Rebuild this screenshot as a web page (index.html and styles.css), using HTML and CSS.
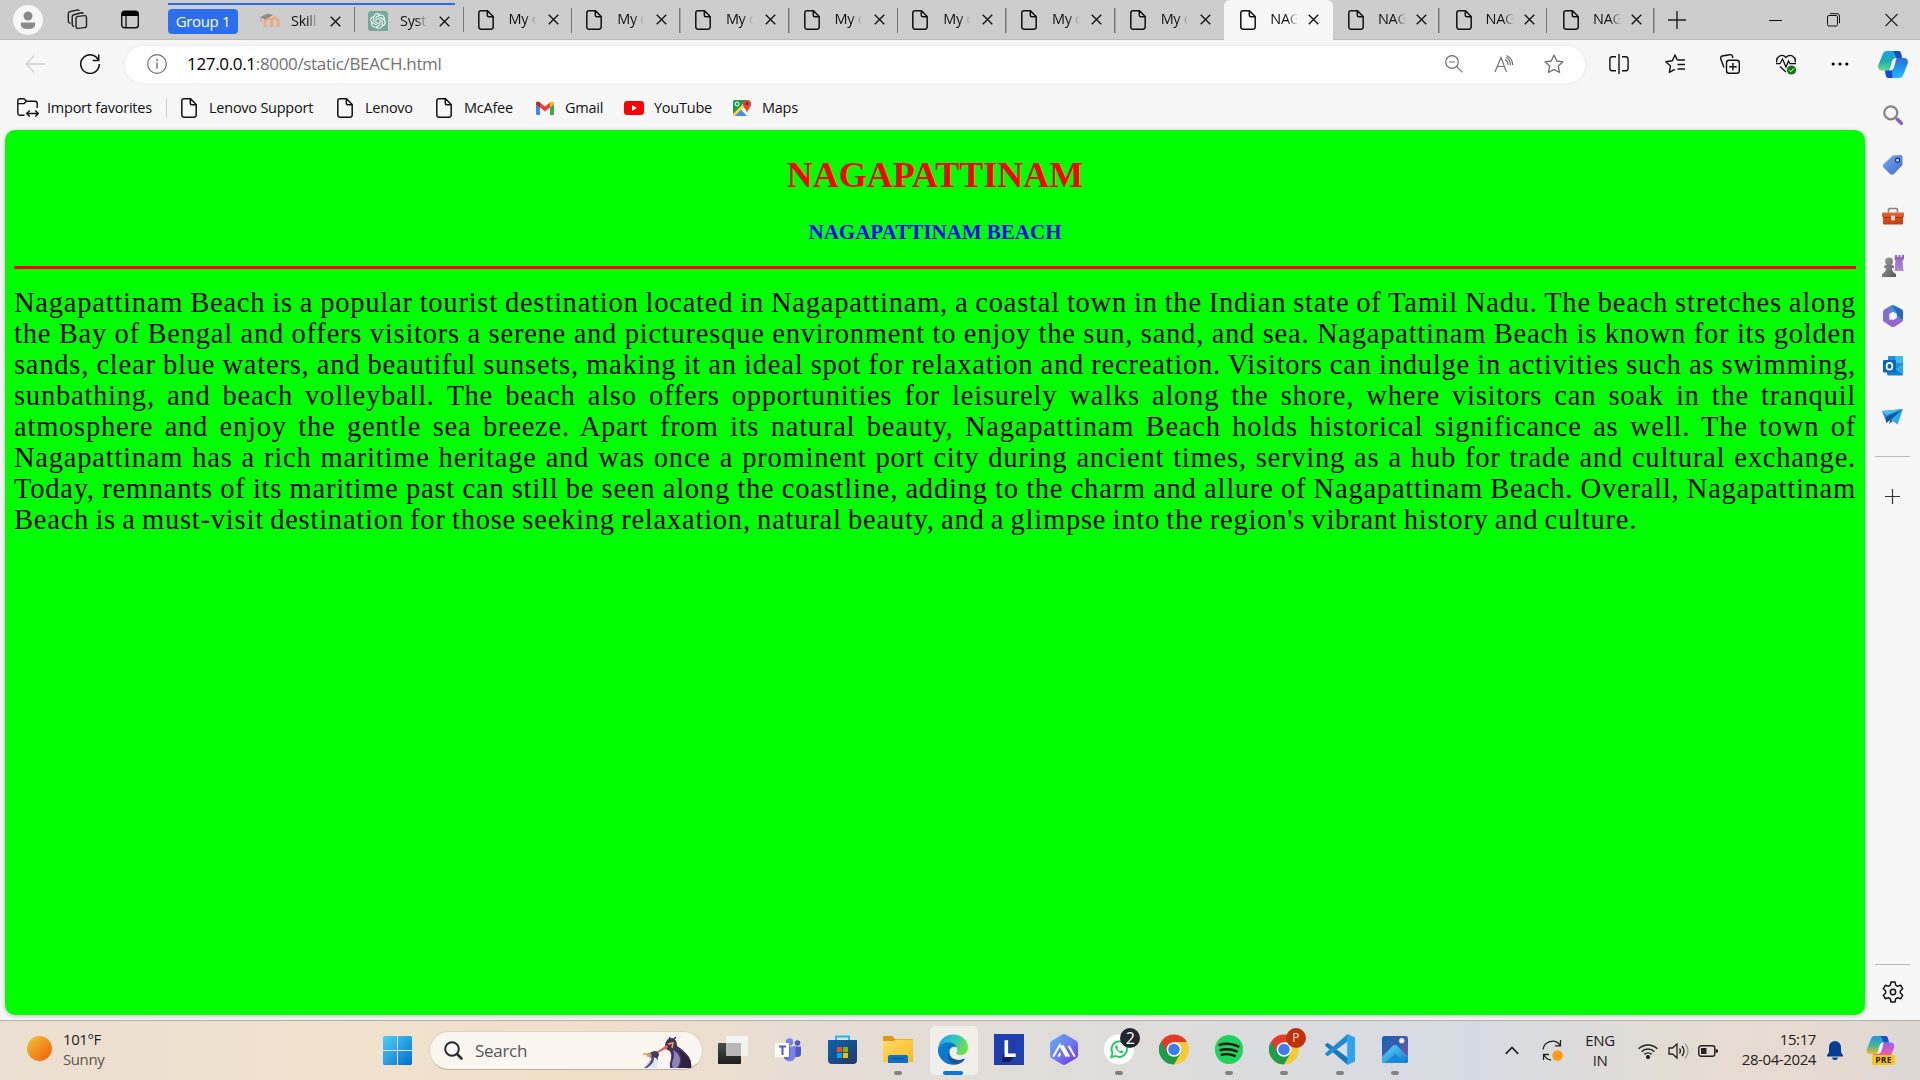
FILE: index.html
```html
<!DOCTYPE html>
<html lang="en">
<head>
<meta charset="utf-8">
<title>NAGAPATTINAM</title>
<link rel="stylesheet" href="styles.css">
</head>
<body>
<svg class="defs" width="0" height="0">
  <defs>
    <symbol id="page" viewBox="0 0 16 20"><path d="M3 .8h6.500L15.200 6.500V17a2.200 2.200 0 0 1-2.200 2.200H3A2.200 2.200 0 0 1 .8 17V3A2.200 2.200 0 0 1 3 .8zM9.300 1v4.200a1.500 1.500 0 0 0 1.500 1.500H15" fill="none" stroke="#111" stroke-width="1.500"/></symbol>
    <symbol id="close" viewBox="0 0 12 12"><path d="M.8.8l10.400 10.400M11.200.8L.8 11.200" fill="none" stroke="#111" stroke-width="1.500"/></symbol>
    <symbol id="chrome" viewBox="0 0 30 30"><circle cx="15" cy="15" r="15" fill="#fcc934"/><path d="M2 7.500A15 15 0 0 0 15 30L21.500 18.700 15 15z" fill="#1e9e4a"/><path d="M28 7.500H15L8.500 18.700 2 7.500A15 15 0 0 1 28 7.500z" fill="#e33b2e"/><path d="M2 7.500L8.500 18.700 15 22 10 29A15 15 0 0 1 2 7.500z" fill="#1e9e4a"/><circle cx="15" cy="15" r="7.300" fill="#fff"/><circle cx="15" cy="15" r="5.800" fill="#3b7ded"/></symbol>
    <linearGradient id="gTag" x1="0" y1="0" x2="1" y2="1"><stop offset="0" stop-color="#7aa7f0"/><stop offset="1" stop-color="#3f6fd0"/></linearGradient>
    <linearGradient id="gCopA" x1="0" y1="0" x2="0" y2="1"><stop offset="0" stop-color="#1aa2ea"/><stop offset=".5" stop-color="#1faab0"/><stop offset="1" stop-color="#62dc8c"/></linearGradient>
    <linearGradient id="gCopB" x1="0" y1="0" x2="0" y2="1"><stop offset="0" stop-color="#2b6fd8"/><stop offset=".6" stop-color="#1d9bf5"/><stop offset="1" stop-color="#29b9ff"/></linearGradient>
    <linearGradient id="gPreA" x1="0" y1="0" x2="0" y2="1"><stop offset="0" stop-color="#2196f0"/><stop offset=".5" stop-color="#3fb59a"/><stop offset="1" stop-color="#f2b92c"/></linearGradient>
    <linearGradient id="gPreB" x1="0" y1="0" x2="0" y2="1"><stop offset="0" stop-color="#9a5cf0"/><stop offset=".6" stop-color="#ec5bb0"/><stop offset="1" stop-color="#f58a6b"/></linearGradient>
    <linearGradient id="gSun" x1="0" y1="0" x2="1" y2="1"><stop offset=".1" stop-color="#edbb34"/><stop offset=".8" stop-color="#f2700f"/></linearGradient>
    <linearGradient id="gWin" gradientUnits="userSpaceOnUse" x1="0" y1="0" x2="29" y2="29"><stop offset="0" stop-color="#4fd0fb"/><stop offset="1" stop-color="#006fd0"/></linearGradient>
    <linearGradient id="gFold" x1="0" y1="0" x2="1" y2="1"><stop offset="0" stop-color="#ffdc68"/><stop offset="1" stop-color="#fcb917"/></linearGradient>
    <linearGradient id="gStore" x1="0" y1="0" x2="1" y2="1"><stop offset="0" stop-color="#0b64b4"/><stop offset="1" stop-color="#243760"/></linearGradient>
    <linearGradient id="gEdgeT" x1="0" y1="0" x2="1" y2=".4"><stop offset="0" stop-color="#1d9ae0"/><stop offset=".5" stop-color="#2cc3d2"/><stop offset="1" stop-color="#6ce04c"/></linearGradient>
    <linearGradient id="gEdgeB" x1="0" y1="0" x2="1" y2="1"><stop offset="0" stop-color="#1385dc"/><stop offset="1" stop-color="#0f4f9e"/></linearGradient>
    <linearGradient id="gHex" x1="0" y1="0" x2="1" y2="1"><stop offset="0" stop-color="#5bb2f5"/><stop offset=".5" stop-color="#6d7cf0"/><stop offset="1" stop-color="#7428ee"/></linearGradient>
    <linearGradient id="gPhoto" x1="0" y1="0" x2="1" y2="1"><stop offset="0" stop-color="#1161b2"/><stop offset="1" stop-color="#7a55a8"/></linearGradient>
    <linearGradient id="gHill" x1="0" y1="0" x2="1" y2="1"><stop offset="0" stop-color="#5ed9fb"/><stop offset="1" stop-color="#0e78cf"/></linearGradient>
    <linearGradient id="gBox" x1="0" y1="0" x2="0" y2="1"><stop offset="0" stop-color="#e8662c"/><stop offset="1" stop-color="#c23c0c"/></linearGradient>
    <linearGradient id="gPawn" x1="0" y1="0" x2="1" y2="1"><stop offset="0" stop-color="#a5a5a5"/><stop offset="1" stop-color="#555"/></linearGradient>
    <linearGradient id="gRook" x1="0" y1="0" x2="0" y2="1"><stop offset="0" stop-color="#8d5fc0"/><stop offset="1" stop-color="#b48ae0"/></linearGradient>
    <linearGradient id="gDark" x1="0" y1="0" x2="0" y2="1"><stop offset="0" stop-color="#4c4c4a"/><stop offset="1" stop-color="#1c1c1a"/></linearGradient>
  </defs>
</svg>

<header class="titlebar">
  <div class="window-tools">
    <svg width="30" height="30" viewBox="0 0 30 30"><circle cx="15" cy="15" r="15" fill="#f7f7f7"/><circle cx="15" cy="11" r="4.500" fill="#8a8a8a"/><path d="M7.800 17.500h14.400v2c0 3-3.200 4.600-7.200 4.600s-7.200-1.600-7.200-4.600z" fill="#8a8a8a"/></svg>
    <svg width="21" height="21" viewBox="0 0 21 21" fill="none" stroke="#222" stroke-width="1.400"><rect x="9" y="7.500" width="10.500" height="12" rx="2" transform="skewY(-6) translate(0 1)"/><path d="M7.200 17.500l-1-.4a2 2 0 0 1-1-1.700V7.600a2 2 0 0 1 1.500-1.900l8-1.900a1.500 1.500 0 0 1 1.500 1M3.500 14.500l-1.200-.7a2 2 0 0 1-1-1.700V4.700a2 2 0 0 1 1.500-1.900L10.500.9a1.600 1.600 0 0 1 1.700 1"/></svg>
    <svg width="18" height="19" viewBox="0 0 18 19"><rect x=".7" y="1.200" width="16.600" height="16.600" rx="2.800" fill="none" stroke="#111" stroke-width="1.400"/><path d="M1 6V3.500A2.500 2.500 0 0 1 3.500 1h11A2.500 2.500 0 0 1 17 3.500V6z" fill="#000"/><path d="M5 6v12" stroke="#111" stroke-width="1.300"/></svg>
  </div>
  <div class="tab-group">
    <span class="group-chip">Group 1</span>
    <div class="tab tab-first">
      <svg class="fav" width="20" height="16" viewBox="0 0 20 16"><path d="M5 14V8.500a3 3 0 0 1 6.500 0V14M11.700 14V8.500a3 3 0 0 1 6.500 0V14" fill="none" stroke="#e9ad80" stroke-width="3"/><path d="M0 4l8-3.500L13 2 5 6.500z" fill="#8a8a86"/><path d="M1 4v5" stroke="#aaa"/></svg>
      <span class="label">Skillrack</span><svg class="x"><use href="#close"/></svg>
    </div>
    <div class="tab">
      <svg class="fav" width="20" height="20" viewBox="0 0 20 20"><path d="M3 0h14a3 3 0 0 1 3 3v17H3a3 3 0 0 1-3-3V3a3 3 0 0 1 3-3z" fill="#75a99c"/><path transform="translate(2.200 2.200) scale(.65)" fill="#fff" d="M22.2819 9.8211a5.9847 5.9847 0 0 0-.5157-4.9108 6.0462 6.0462 0 0 0-6.5098-2.9A6.0651 6.0651 0 0 0 4.9807 4.1818a5.9847 5.9847 0 0 0-3.9977 2.9 6.0462 6.0462 0 0 0 .7427 7.0966 5.98 5.98 0 0 0 .511 4.9107 6.051 6.051 0 0 0 6.5146 2.9001A5.9847 5.9847 0 0 0 13.2599 24a6.0557 6.0557 0 0 0 5.7718-4.2058 5.9894 5.9894 0 0 0 3.9977-2.9001 6.0557 6.0557 0 0 0-.7475-7.0729zm-9.022 12.6081a4.4755 4.4755 0 0 1-2.8764-1.0408l.1419-.0804 4.7783-2.7582a.7948.7948 0 0 0 .3927-.6813v-6.7369l2.02 1.1686a.071.071 0 0 1 .038.052v5.5826a4.504 4.504 0 0 1-4.4945 4.4944zm-9.6607-4.1254a4.4708 4.4708 0 0 1-.5346-3.0137l.142.0852 4.783 2.7582a.7712.7712 0 0 0 .7806 0l5.8428-3.3685v2.3324a.0804.0804 0 0 1-.0332.0615L9.74 19.9502a4.4992 4.4992 0 0 1-6.1408-1.6464zM2.3408 7.8956a4.485 4.485 0 0 1 2.3655-1.9728V11.6a.7664.7664 0 0 0 .3879.6765l5.8144 3.3543-2.0201 1.1685a.0757.0757 0 0 1-.071 0l-4.8303-2.7865A4.504 4.504 0 0 1 2.3408 7.872zm16.5963 3.8558L13.1038 8.364 15.1192 7.2a.0757.0757 0 0 1 .071 0l4.8303 2.7913a4.4944 4.4944 0 0 1-.6765 8.1042v-5.6772a.79.79 0 0 0-.407-.667zm2.0107-3.0231l-.142-.0852-4.7735-2.7818a.7759.7759 0 0 0-.7854 0L9.409 9.2297V6.8974a.0662.0662 0 0 1 .0284-.0615l4.8303-2.7866a4.4992 4.4992 0 0 1 6.6802 4.66zM8.3065 12.863l-2.02-1.1638a.0804.0804 0 0 1-.038-.0567V6.0742a4.4992 4.4992 0 0 1 7.3757-3.4537l-.142.0805L8.704 5.459a.7948.7948 0 0 0-.3927.6813zm1.0976-2.3654l2.602-1.4998 2.6069 1.4998v2.9994l-2.5974 1.4997-2.6067-1.4997z"/></svg>
      <span class="label">System</span><svg class="x"><use href="#close"/></svg>
    </div>
  </div>
  <div class="tabs">
    <div class="tab"><svg class="pg"><use href="#page"/></svg><span class="label">My c</span><svg class="x"><use href="#close"/></svg></div>
    <div class="tab"><svg class="pg"><use href="#page"/></svg><span class="label">My c</span><svg class="x"><use href="#close"/></svg></div>
    <div class="tab"><svg class="pg"><use href="#page"/></svg><span class="label">My c</span><svg class="x"><use href="#close"/></svg></div>
    <div class="tab"><svg class="pg"><use href="#page"/></svg><span class="label">My c</span><svg class="x"><use href="#close"/></svg></div>
    <div class="tab"><svg class="pg"><use href="#page"/></svg><span class="label">My c</span><svg class="x"><use href="#close"/></svg></div>
    <div class="tab"><svg class="pg"><use href="#page"/></svg><span class="label">My c</span><svg class="x"><use href="#close"/></svg></div>
    <div class="tab plain"><svg class="pg"><use href="#page"/></svg><span class="label">My c</span><svg class="x"><use href="#close"/></svg></div>
    <div class="tab nag active"><svg class="pg"><use href="#page"/></svg><span class="label">NAG</span><svg class="x"><use href="#close"/></svg></div>
    <div class="tab nag"><svg class="pg"><use href="#page"/></svg><span class="label">NAG</span><svg class="x"><use href="#close"/></svg></div>
    <div class="tab nag"><svg class="pg"><use href="#page"/></svg><span class="label">NAG</span><svg class="x"><use href="#close"/></svg></div>
    <div class="tab nag"><svg class="pg"><use href="#page"/></svg><span class="label">NAG</span><svg class="x"><use href="#close"/></svg></div>
  </div>
  <svg class="new-tab" width="18" height="18" viewBox="0 0 18 18"><path d="M9 0v18M0 9h18" stroke="#222" stroke-width="1.400"/></svg>
  <div class="window-buttons">
    <svg width="13" height="14" viewBox="0 0 13 14"><path d="M0 7.500h13" stroke="#111"/></svg>
    <svg width="13" height="14" viewBox="0 0 13 14" fill="none" stroke="#111"><rect x=".5" y="2.500" width="10" height="10.500" rx="1.500"/><path d="M3 .7h7a2.500 2.500 0 0 1 2.500 2.500v7"/></svg>
    <svg width="13" height="14" viewBox="0 0 13 14"><path d="M.5 1l12 12M12.500 1l-12 12" stroke="#222" stroke-width="1.100"/></svg>
  </div>
</header>

<div class="browser">
  <div class="column">
    <div class="toolbar">
      <svg class="back" width="20" height="18" viewBox="0 0 20 18"><path d="M20 9H1M9.500.5L1 9l8.500 8.500" fill="none" stroke="#cfcfcf" stroke-width="1.300"/></svg>
      <svg class="reload" width="20" height="20" viewBox="0 0 20 20"><path d="M18.600 6.500A9.300 9.300 0 1 0 19.300 10M18.700.5v6h-6" fill="none" stroke="#111" stroke-width="1.500"/></svg>
      <div class="address">
        <svg width="20" height="20" viewBox="0 0 20 20"><circle cx="10" cy="10" r="9.300" fill="none" stroke="#707070" stroke-width="1.200"/><path d="M10 8.500v6" stroke="#666" stroke-width="1.300"/><circle cx="10" cy="6" r=".9" fill="#666"/></svg>
        <span class="url">127.0.0.1<i>:8000/static/BEACH.html</i></span>
        <div class="address-actions">
          <svg width="18" height="18" viewBox="0 0 18 18" fill="none" stroke="#707070" stroke-width="1.200"><circle cx="7" cy="7" r="6.300"/><path d="M4 7h6M11.700 11.700l5.600 5.600"/></svg>
          <svg width="20" height="18" viewBox="0 0 20 18" fill="none" stroke="#707070" stroke-width="1.200"><path d="M1 17L7 2.500 12.500 17M3.200 11.500h7.300M11 4.500a6 6 0 0 1 3 5.500M12 2.200a9 9 0 0 1 4.500 8M12.500.5a11 11 0 0 1 6.200 9.500"/></svg>
          <svg width="20" height="20" viewBox="0 0 20 20"><path d="M10 1.100l2.700 5.900 6.300.8-4.700 4.300 1.300 6.400L10 15.400l-5.600 3.100 1.300-6.400L1 7.800 7.300 7z" fill="none" stroke="#707070" stroke-width="1.300" stroke-linejoin="round"/></svg>
        </div>
      </div>
      <div class="actions">
        <svg width="20" height="20" viewBox="0 0 20 20" fill="none" stroke="#111" stroke-width="1.400"><path d="M7 2.700H3A2.200 2.200 0 0 0 .9 5v9.500a2.200 2.200 0 0 0 2.100 2.200h4M13 2.700h4A2.200 2.200 0 0 1 19.100 5v9.500a2.200 2.200 0 0 1-2.100 2.200h-4M10 0v20"/></svg>
        <svg width="20" height="20" viewBox="0 0 20 20" fill="none" stroke="#111" stroke-width="1.400" stroke-linejoin="round"><path d="M13 6H20M12.500 10.500H20M12.500 15H20M12.500 6.500L10 1 7.300 6.800.8 7.700l4.700 4.200-1.200 6.500 5.500-3"/></svg>
        <svg width="20" height="20" viewBox="0 0 20 20" fill="none" stroke="#111" stroke-width="1.400"><rect x="6.500" y="6.200" width="12.800" height="13" rx="2.500"/><path d="M12.900 9v7.500M9.200 12.700h7.500M4 13.500L.8 5A2.500 2.500 0 0 1 2.200 2L9.500.7A2.500 2.500 0 0 1 12.500 2.500l.5 1.500"/></svg>
        <svg width="20" height="21" viewBox="0 0 20 21"><path d="M.8 8.500C-.3 2.500 6-1 10 3.500c4-4.500 10.300-1 9.200 5M0 9.700h4L6.500 5l3.500 8 2.500-6 1.500 2.700h6M4 12.500l6 5.500" fill="none" stroke="#111" stroke-width="1.300"/><circle cx="15.500" cy="16" r="4.600" fill="#0f7b0f"/><path d="M13.200 16l1.700 1.700 3-3.300" fill="none" stroke="#fff"/></svg>
        <svg width="18" height="6" viewBox="0 0 18 6"><circle cx="2.200" cy="3" r="1.600"/><circle cx="9" cy="3" r="1.600"/><circle cx="15.800" cy="3" r="1.600"/></svg>
      </div>
    </div>
    <nav class="favorites">
      <a class="import"><svg width="22" height="20" viewBox="0 0 22 20" fill="none" stroke="#111" stroke-width="1.400"><path d="M7.500 17.300H3A2.200 2.200 0 0 1 .8 15V3A2.200 2.200 0 0 1 3 .8h4l2.500 2.400H18a2.200 2.200 0 0 1 2.200 2.200V10M.8 5.600H7l2.500-2.400M10 15.500h11M12.700 12.500l-3 3 3 3M18.300 12.500l3 3-3 3"/></svg>Import favorites</a>
      <a class="lensup"><svg class="pg"><use href="#page"/></svg>Lenovo Support</a>
      <a class="lenovo"><svg class="pg"><use href="#page"/></svg>Lenovo</a>
      <a class="mcafee"><svg class="pg"><use href="#page"/></svg>McAfee</a>
      <a class="gmail"><svg width="18" height="14" viewBox="0 0 18 14"><path d="M0 2.500L4 5v9H1.200A1.200 1.200 0 0 1 0 12.800z" fill="#4285f4"/><path d="M18 2.500L14 5v9h2.800a1.200 1.200 0 0 0 1.200-1.200z" fill="#34a853"/><path d="M4 1.500l5 4 5-4v5l-5 4-5-4z" fill="#ea4335"/><path d="M0 2.500C0 .5 2-.5 4 1.500v5L0 3.500z" fill="#c5221f"/><path d="M18 2.500C18 .5 16-.5 14 1.500v5l4-3z" fill="#fbbc04"/></svg>Gmail</a>
      <a class="youtube"><svg width="20" height="14" viewBox="0 0 20 14"><rect width="20" height="14" rx="3" fill="#f00"/><path d="M8 4v6l5-3z" fill="#fff"/></svg>YouTube</a>
      <a class="maps"><svg width="18" height="18" viewBox="0 0 18 18"><rect y="1" width="16" height="16" rx="1.500" fill="#e8eaed"/><path d="M0 14.500V2.500A1.500 1.500 0 0 1 1.500 1H13L1 16z" fill="#1f9a55"/><path d="M1 16.500L8 10l7 7H2z" fill="#4a89f3"/><path d="M0 15L12 3l1.500 2L2 17z" fill="#fdd835"/><path d="M8 10.500l6 6.500 2-1.500-5.500-6z" fill="#fff"/><circle cx="4" cy="5" r="2" fill="none" stroke="#fff"/><path d="M14 14c-.5-4-4-5-4-9a4 4 0 0 1 8 0c0 4-3.500 5-4 9z" fill="#db4437"/><circle cx="14" cy="4.700" r="1.400" fill="#7b231d"/></svg>Maps</a>
    </nav>
    <main class="page">
      <h1>NAGAPATTINAM</h1>
      <h3>NAGAPATTINAM BEACH</h3>
      <hr>
      <p>
        <span>Nagapattinam Beach is a popular tourist destination located in Nagapattinam, a coastal town in the Indian state of Tamil Nadu. The beach stretches along</span>
        <span>the Bay of Bengal and offers visitors a serene and picturesque environment to enjoy the sun, sand, and sea. Nagapattinam Beach is known for its golden</span>
        <span>sands, clear blue waters, and beautiful sunsets, making it an ideal spot for relaxation and recreation. Visitors can indulge in activities such as swimming,</span>
        <span>sunbathing, and beach volleyball. The beach also offers opportunities for leisurely walks along the shore, where visitors can soak in the tranquil</span>
        <span>atmosphere and enjoy the gentle sea breeze. Apart from its natural beauty, Nagapattinam Beach holds historical significance as well. The town of</span>
        <span>Nagapattinam has a rich maritime heritage and was once a prominent port city during ancient times, serving as a hub for trade and cultural exchange.</span>
        <span>Today, remnants of its maritime past can still be seen along the coastline, adding to the charm and allure of Nagapattinam Beach. Overall, Nagapattinam</span>
        <span class="last">Beach is a must-visit destination for those seeking relaxation, natural beauty, and a glimpse into the region's vibrant history and culture.</span>
      </p>
    </main>
  </div>

  <aside class="sidebar">
    <svg class="copilot" width="30" height="27" viewBox="0 0 30 27"><path d="M5 2.500A3.600 3.600 0 0 1 8.500 0H20a3 3 0 0 1 3 2.300L24 7h-5a4 4 0 0 0-4 3l-2 7a3.500 3.500 0 0 1-3.300 2.500H4C1 19.500-.5 17 .3 14z" fill="url(#gCopA)"/><path d="M15 0h5a3 3 0 0 1 3 2.300L24 7h-5.500z" fill="#134fb8"/><path d="M25 24.500a3.600 3.600 0 0 1-3.500 2.500H11a3 3 0 0 1-3-2.300L7 19.500h3a4 4 0 0 0 3.500-2.500l2-7A4 4 0 0 1 19 7h7c3 0 4.500 2.500 3.700 5.500z" fill="url(#gCopB)"/><path d="M14.500 27H11a3 3 0 0 1-3-2.300L7 19.500h3q3 0 4-2z" fill="#1a46d8"/><path d="M14 10.500q1-3.300 4.500-3.500l-2.600 9.500q-1 3-4.400 3.200z" fill="#fff"/></svg>
    <svg class="tool" width="20" viewBox="0 0 20 20"><circle cx="7.800" cy="7.800" r="6.500" fill="none" stroke="#858585" stroke-width="2.200"/><path d="M14.300 14.300l4 4" stroke="#8e5cc4" stroke-width="3.600" stroke-linecap="round"/></svg>
    <svg class="tool" width="21" viewBox="0 0 21 21"><path d="M11 1l8-.5q1.500.5 1.500 2v8L12 19.500q-2 1.500-4 0L1.500 13q-1.500-2 0-3.500z" fill="url(#gTag)"/><circle cx="15.500" cy="5.700" r="1.900" fill="#fff" stroke="#1c3c8c" stroke-width="1.400"/></svg>
    <svg class="tool" width="22" viewBox="0 0 22 17"><path d="M6.500 5V2.500A1.500 1.500 0 0 1 8 1h6a1.500 1.500 0 0 1 1.500 1.500V5" fill="none" stroke="#858585" stroke-width="1.700"/><path d="M1 5h20a1 1 0 0 1 1 1v3l-1 1v6a1 1 0 0 1-1 1H2a1 1 0 0 1-1-1v-6L0 9V6a1 1 0 0 1 1-1z" fill="url(#gBox)"/><path d="M1 10h20" stroke="#a9340c"/><rect x="9" y="8" width="4" height="5" rx=".7" fill="#d5d5d5"/></svg>
    <svg class="tool" width="22" viewBox="0 0 22 22"><path d="M13 0h2v2h1.500V0h2v2H20V0h2v4l-1.500 2 1 10h-9l1-10-1-2z" fill="url(#gRook)"/><path d="M3 6.500a4 4 0 1 1 8 0 4 4 0 0 1-1.500 3L12 11v2h-2q0 4 4 6v3H0v-3q4-2 4-6H2v-2l2.500-1.500A4 4 0 0 1 3 6.500z" fill="url(#gPawn)"/></svg>
    <svg class="tool" width="20" viewBox="0 0 20 22"><path d="M0 16V7q0-2 2-3l6-3.500 4 6L6.500 9.500V16L2 17.500z" fill="#806fce"/><path d="M8 .5q2-1 4 0L18 4q2 1 2 3v9l-6.500-3.500v-3L7 6z" fill="#3897dc"/><path d="M18 4q2 1 2 3v8l-6.500-5.500V7L8 .5z" fill="#2469bd"/><path d="M20 14.500q0 2-2 3L12 21.500q-2 1-4 0l-6-4L13 12z" fill="#9566cc"/><path d="M6.500 8.800L10 6.800l3.700 2v4.300L10 15.200l-3.500-2.100z" fill="#f7f7f7"/></svg>
    <svg class="tool" width="20" viewBox="0 0 20 20"><rect x="5" y="0" width="15" height="14" rx="1" fill="#1c92df"/><path d="M12.500 0H20v7h-7.500z" fill="#42bdf0"/><path d="M4 8l8 4 8-4v10a1.500 1.500 0 0 1-1.500 1.500h-13A1.500 1.500 0 0 1 4 18z" fill="#1680d0"/><path d="M12 13l8-5v10.500z" fill="#2aa9ea"/><rect y="4" width="13" height="12.500" rx="1.200" fill="#0868bd"/><ellipse cx="6.500" cy="10.200" rx="2.900" ry="3.400" fill="none" stroke="#fff" stroke-width="1.700"/></svg>
    <svg class="tool" width="21" viewBox="0 0 21 16"><path d="M0 2L21 0 8 10 4 12.500z" fill="#1b8edc"/><path d="M21 0L15.500 15.500 8.500 10z" fill="#29a9ef"/><path d="M0 2L21 0 4.500 6z" fill="#49bff4"/><path d="M21 0L4 8v6l4.500-3z" fill="#0e559b"/><path d="M8.500 10L7 15l4-3z" fill="#0c65b3"/></svg>
    <hr>
    <svg class="add" width="15" height="15" viewBox="0 0 15 15"><path d="M7.500 0v15M0 7.500h15" stroke="#333" stroke-width="1.200"/></svg>
    <hr class="low">
    <svg class="gear" width="22" height="22" viewBox="0 0 22 22" fill="none" stroke="#111" stroke-width="1.500" stroke-linejoin="round"><path d="M9 1h4l.7 3.200 1.900 1.100 3.100-1 2 3.500L18.300 10v2l2.400 2.200-2 3.500-3.100-1-1.900 1.100L13 21H9l-.7-3.200-1.900-1.100-3.100 1-2-3.500L3.700 12v-2L1.300 7.800l2-3.500 3.100 1 1.900-1.100z"/><circle cx="11" cy="11" r="2.700"/></svg>
  </aside>
</div>

<footer class="taskbar">
  <div class="weather">
    <svg width="25" height="25" viewBox="0 0 25 25"><circle cx="12.500" cy="12.500" r="12.500" fill="url(#gSun)"/></svg>
    <div><b>101°F</b><span>Sunny</span></div>
  </div>
  <svg class="start" width="29" height="29" viewBox="0 0 29 29" fill="url(#gWin)"><path d="M1 0h13v14H0V1zM15 0h13l1 1v13H15zM0 15h14v14H1l-1-1zM15 15h14v13l-1 1H15z"/></svg>
  <div class="search">
    <svg width="19" height="19" viewBox="0 0 19 19"><circle cx="8" cy="8" r="6.800" fill="#fff" stroke="#2b2b2b" stroke-width="2"/><path d="M13 13l4.500 4.500" stroke="#2b2b2b" stroke-width="2.500" stroke-linecap="round"/></svg>
    <span>Search</span>
    <svg class="penguins" width="49" height="32" viewBox="0 0 49 32"><path d="M27 31q-1-5 1-9 1-4-1-8-5-1-5-6 1-7 7-7 5 1 5 8 8 5 12 11 3 5 2 11z" fill="#46305e"/><path d="M30 31q-2-4 0-8 2-5 0-10 6 3 7 9 0 6-3 9z" fill="#8e84b8"/><path d="M36 13q14 8 12 18H36q5-8 0-18z" fill="#30203f"/><path d="M12 16L24 8l1 3q-7 3-12 6z" fill="#ee5a3c"/><path d="M24 6l3-4M26 3l1-3M30 3l3-3" stroke="#3e2d50" stroke-width="1.500"/><path d="M25 7l5-1-1 5" fill="none" stroke="#e8ae55" stroke-width="1.500"/><path d="M4 17l7-3q5 0 5 4-2 3-1 5l-6-1z" fill="#4b3763"/><path d="M9 21q5-2 6 4l-1 6H1q2-6 8-10z" fill="#dfe8f2"/><path d="M9 20q-1 6-8 11h3q8-5 7-11z" fill="#5e5079"/><path d="M0 17h8l-4 2h5" fill="none" stroke="#cfa05a" stroke-width="1.500"/></svg>
  </div>
  <div class="apps">
    <div class="app"><svg width="30" height="28" viewBox="0 0 30 28"><rect y="7" width="23" height="21" rx="1" fill="url(#gDark)"/><rect x="8" y="0" width="22" height="20" rx="1" fill="#f4f3f1"/><path d="M8 7h15v13H8z" fill="#b8b7b5"/></svg></div>
    <div class="app"><svg width="26" height="24" viewBox="0 0 26 24"><circle cx="14.500" cy="4" r="3.700" fill="#7b83eb"/><circle cx="22.500" cy="5" r="2.800" fill="#5059c9"/><path d="M18 8.500h8V16q0 3-4 3h-4z" fill="#5059c9"/><path d="M9 8.500h11.500V18q-.5 5-6 5.500-5-.5-5.500-5z" fill="#7b83eb"/><path d="M14 8v12H9" fill="none" stroke="#4a50a8"/><path d="M0 5h14v14H0z" fill="#fff"/><path d="M4 8.500h7M7.500 8.500V17" stroke="#5059c9" stroke-width="2"/></svg></div>
    <div class="app"><svg width="29" height="30" viewBox="0 0 29 30"><path d="M8 6V1.500h13V6" fill="none" stroke="#28b5f0" stroke-width="2"/><path d="M0 5h29v20a4 4 0 0 1-4 4H4a4 4 0 0 1-4-4z" fill="url(#gStore)"/><path d="M9 12h5v5H9z" fill="#f25022"/><path d="M15 12h5v5h-5z" fill="#7fba00"/><path d="M9 18h5v5H9z" fill="#00a4ef"/><path d="M15 18h5v5h-5z" fill="#ffb900"/></svg></div>
    <div class="app run"><svg width="30" height="27" viewBox="0 0 30 27"><path d="M0 1q0-1 1-1h8l3 3h17q1 0 1 1v5H0z" fill="#dc9a0c"/><path d="M0 5h11l2-1.500h17V26H0z" fill="url(#gFold)"/><path d="M5 27v-6q0-2 2-2h16q2 0 2 2v6z" fill="#0c72c8"/><path d="M9 22.500h12" stroke="#0a4b8a" stroke-width="1.200"/></svg></div>
    <div class="app edge"><svg width="30" height="31" viewBox="0 0 30 30"><path d="M0 16A15 15 0 0 1 15 0C24 0 30 6 30 13c0 5-3.500 7.500-7.500 7.500-3 0-5-1-4-2.500 2-3 .5-7-4-7C7 11 2 13 0 16z" fill="url(#gEdgeT)"/><path d="M0 16C1 10 7 7 12 8c4 .5 6 2.500 6.500 5-3-2-6 0-7 3-1.500 6 4 10 10 9.500 2.500-.2 4-1 5.500-1.500C25 28 20 30 15 30A15 15 0 0 1 0 16z" fill="url(#gEdgeB)"/><path d="M11.500 14.500C8 20 10 28 17 29.900 9 31 2 26 0 17q4-6 11.500-2.500z" fill="#0d78d4"/><path d="M11.500 16c-1.500 6 4 10 10 9.500 2.500-.2 4-1 5.500-1.500-2.500 4-6 6-10 6-6-1.500-8.500-8-5.500-14z" fill="#155a9f"/></svg></div>
    <div class="app"><svg width="30" height="31" viewBox="0 0 29 30"><path d="M0 0h29v30H0z" fill="#1e3fb0"/><path d="M8 21l3-4v5h9l-5 5H8z" fill="#0c1f5c"/><path d="M11.900 6v14.500H21" fill="none" stroke="#fff" stroke-width="3.500"/></svg></div>
    <div class="app"><svg width="28" height="31" viewBox="0 0 27 30"><path d="M11.500.7q2-1.200 4 0l9.500 5.500q2 1.200 2 3.300v11q0 2.100-2 3.300l-9.500 5.500q-2 1.200-4 0L2 23.800q-2-1.200-2-3.300v-11q0-2.100 2-3.300z" fill="url(#gHex)"/><path d="M3 22L9.500 10.500 16 22M8 22l2-3.500M12 11l6.500 11M18 11.500L24 22" fill="none" stroke="#fff" stroke-width="2"/></svg></div>
    <div class="app run"><svg width="30" height="31" viewBox="0 0 29 30"><circle cx="14.500" cy="15" r="14.500" fill="#fff"/><path d="M7 22.500l1.200-4.200a7.500 7.500 0 1 1 2.900 2.900z" fill="none" stroke="#2bc665" stroke-width="1.800"/><path d="M12 10.500q-2 1.500-.5 4t4.500 4q2.500.5 3-1.500l-2.200-1.300-1.300 1q-2-1-2.500-2.500l.8-1.200z" fill="#2bc665"/></svg><span class="badge">2</span></div>
    <div class="app"><svg width="30" height="31"><use href="#chrome"/></svg></div>
    <div class="app run"><svg width="28" height="29" viewBox="0 0 27 28"><rect width="27" height="28" rx="13.500" fill="#1ed45f"/><path d="M4.500 9.500q9-2.500 18 1.500M5.500 14.500q8-2 15.500 1.300M6.500 19q7-1.500 12.500 1.200" fill="none" stroke="#121212" stroke-width="2.400" stroke-linecap="round"/></svg></div>
    <div class="app run"><svg width="30" height="31"><use href="#chrome"/></svg><span class="badge red">P</span></div>
    <div class="app run"><svg width="30" height="31" viewBox="0 0 29 30"><path d="M0 10.500L2.500 8.500 22 23v7L.5 11.500z" fill="#1279bd"/><path d="M0 19.500l2.500 2L22 7V0L.5 18.500z" fill="#1c8cd4"/><path d="M21.500 0L29 3.500v23L21.500 30z" fill="#2ba4f2"/></svg></div>
    <div class="app run"><svg width="26" height="27" viewBox="0 0 25 26"><rect width="25" height="26" rx="2.500" fill="url(#gPhoto)"/><path d="M0 20L10.500 9.500q2-1.500 4 0L25 20v3.500a2.500 2.500 0 0 1-2.500 2.500h-20A2.500 2.500 0 0 1 0 23.500z" fill="url(#gHill)"/><path d="M12.500 17L22 26H3z" fill="#1689da"/><circle cx="19" cy="4.500" r="2.500" fill="#e6effa"/></svg></div>
  </div>
  <div class="tray">
    <svg class="caret" width="14" height="9" viewBox="0 0 14 9"><path d="M.8 7.800L7 1.500l6.200 6.300" fill="none" stroke="#222" stroke-width="1.700"/></svg>
    <svg class="sync" width="21" height="21" viewBox="0 0 21 21"><path d="M1 9.500A9.500 9.500 0 0 1 18 5M18.500 0v5.800h-5.500M9 20a9 9 0 0 1-7-5M1.500 20v-5.500H7" fill="none" stroke="#222" stroke-width="1.300"/><circle cx="15.500" cy="15.500" r="5.200" fill="#fd9a10"/></svg>
    <div class="lang"><span>ENG</span><span>IN</span></div>
    <svg class="wifi" width="20" height="16" viewBox="0 0 20 16" fill="none" stroke="#222" stroke-width="1.500"><path d="M.7 5.800a13.200 13.200 0 0 1 18.600 0M3.600 8.700a9 9 0 0 1 12.800 0M6.400 11.400a5.200 5.200 0 0 1 7.200 0"/><circle cx="10" cy="14" r="1.300" fill="#222"/></svg>
    <svg class="volume" width="21" height="18" viewBox="0 0 21 18" fill="none" stroke="#222" stroke-width="1.300"><path d="M1 6h3.500L9 2v14l-4.500-4H1z"/><path d="M11.500 6.500q2 2.500 0 5M14 4q4 5 0 10"/><path d="M17 1.500q6 7.500 0 15" stroke="#999"/></svg>
    <svg class="battery" width="20" height="12" viewBox="0 0 20 12"><rect x=".8" y=".8" width="16" height="10.400" rx="2.300" fill="none" stroke="#222" stroke-width="1.400"/><path d="M3 3h5.500v6H3zM17.500 4L20 4.700v2.600l-2.500.7z" fill="#222"/></svg>
    <div class="clock"><span>15:17</span><span>28-04-2024</span></div>
    <svg class="bell" width="16" height="19" viewBox="0 0 16 19"><path d="M8 0a6 6 0 0 1 6 6v5l2 3.500v1H0v-1L2 11V6a6 6 0 0 1 6-6zM5 16.500h6q-.5 2.500-3 2.500t-3-2.500z" fill="#053f91"/></svg>
    <div class="preview"><svg width="29" height="25" viewBox="0 0 30 27"><path d="M5 2.500A3.600 3.600 0 0 1 8.500 0H20a3 3 0 0 1 3 2.300L24 7h-5a4 4 0 0 0-4 3l-2 7a3.500 3.500 0 0 1-3.300 2.500H4C1 19.500-.5 17 .3 14z" fill="url(#gPreA)"/><path d="M15 0h5a3 3 0 0 1 3 2.300L24 7h-5.500z" fill="#1b4ec9"/><path d="M25 24.500a3.600 3.600 0 0 1-3.500 2.500H11a3 3 0 0 1-3-2.300L7 19.500h3a4 4 0 0 0 3.500-2.500l2-7A4 4 0 0 1 19 7h7c3 0 4.500 2.500 3.700 5.500z" fill="url(#gPreB)"/><path d="M14 10.500q1-3.300 4.500-3.500l-2.600 9.500q-1 3-4.400 3.200z" fill="#fff"/></svg><b>PRE</b></div>
  </div>
</footer>
</body>
</html>
```

FILE: styles.css
```css
* { box-sizing: border-box; }
html, body { margin: 0; height: 100%; overflow: hidden; }
body {
  display: grid;
  grid-template-rows: 40px 980px 60px;
  width: 1920px;
  background: #f7f7f7;
  font-family: "Open Sans", "Noto Sans", sans-serif;
  color: #111;
}
svg { display: block; flex: none; }
.defs { position: absolute; }
.pg { width: 16px; height: 20px; }

/* Title bar */
.titlebar { display: flex; align-items: center; height: 40px; padding-bottom: 1px; background: #cdcdcd; box-shadow: inset 0 -1px #bbb; }
.window-tools { display: flex; align-items: center; width: 168px; padding-left: 13px; }
.window-tools svg:nth-child(2) { margin-left: 24px; }
.window-tools svg:nth-child(3) { margin-left: 33px; }
.tab-group {
  display: flex; align-items: center; width: 287px; height: 37px; margin: 3px 8.500px 0 0;
  border-top: 2px solid #2a6fe8; padding-bottom: 2px;
}
.group-chip {
  flex: none; width: 70px; height: 25px; border-radius: 4px; background: #2b6fee; color: #fff;
  font-size: 15px; line-height: 24px; text-align: center; letter-spacing: -.35px;
}
.tab {
  display: flex; align-items: center; flex: none; width: 108.700px; height: 39px; padding-left: 14px;
  background: linear-gradient(#777, #777) right 0 top 8px / 1.500px 25px no-repeat;
}
.tab .pg { margin-right: 15px; }
.tab .label {
  width: 27px; margin-top: -1px; overflow: hidden; white-space: nowrap; font-size: 14.500px; line-height: 24px; letter-spacing: -.3px;
  -webkit-mask-image: linear-gradient(90deg, #000 60%, transparent);
  mask-image: linear-gradient(90deg, #000 60%, transparent);
}
.tab .x { width: 11px; height: 11px; margin-left: 12px; }
.tab-group .tab { height: 37px; background-position: right 0 top 4px; }
.tab-group .tab .fav { margin-right: 12px; }
.tab-group .tab-first { width: 117px; padding-left: 22px; }
.tab-group .tab:last-child { width: 109px; padding-left: 13px; }
.tab-group .tab-first .fav { margin-right: 11px; }
.tabs { display: flex; }
.tab.plain { background: none; }
.tab.nag { width: 107.600px; padding-left: 16px; }
.tab.nag .pg { margin-right: 14px; }
.tab.nag .label { width: 28px; }
.tab.nag .x { margin-left: 10px; }
.tab.active { width: 109px; height: 40px; margin: 0 -1.400px -1px 0; padding-bottom: 1px; background: #f7f7f7; border-radius: 6px 6px 0 0; }
.new-tab { margin-left: 13px; }
.window-buttons { display: flex; gap: 45px; margin-left: 83.500px; }

/* Browser frame */
.browser { display: grid; grid-template-columns: 1865px 55px; }
.column { display: grid; grid-template-rows: 48px 42px 885px; padding-left: 5px; }
.toolbar { display: flex; align-items: center; }
.back { margin-left: 20px; }
.reload { margin-left: 35px; }
.address {
  display: flex; align-items: center; width: 1460px; height: 37px; margin: 0 0 0 25px; padding: 0 21px 0 22px;
  border-radius: 19px; background: #fff; box-shadow: 0 0 4px #e6e6e6;
}
.url { margin: -2px 0 0 20px; font-size: 17px; letter-spacing: -.33px; color: #000; }
.url i { font-style: normal; color: #737373; }
.address-actions { display: flex; align-items: center; gap: 30.500px; margin-left: auto; }
.actions { display: flex; align-items: center; gap: 35.500px; margin-left: 24px; }
.favorites { display: flex; align-items: center; padding: 0 0 3px 12px; font-size: 14.500px; letter-spacing: -.24px; white-space: nowrap; }
.favorites a { display: flex; align-items: center; gap: 12px; }
.import { width: 150px; height: 20px; border-right: 1px solid #ccc; }
.favorites .import { gap: 8px; }
.lensup { width: 156px; margin-left: 14px; }
.lenovo { width: 99px; }
.mcafee { width: 100px; }
.gmail { width: 88px; }
.youtube { width: 109px; }
.favorites .gmail, .favorites .maps { gap: 11px; }
.favorites .youtube { gap: 10px; }

/* Web page */
.page {
  padding: 0 9px; border-radius: 10px; background: #0f0; box-shadow: 0 1px 4px #bbb;
  font-family: "Liberation Serif", serif;
}
h1 { margin: 24px 0 0; color: #f00; text-align: center; font-size: 36px; line-height: 42px; }
h3 { margin: 24px 0 0; color: #00f; text-align: center; font-size: 21px; line-height: 24px; }
.page hr { height: 3px; margin: 22px 0 0; border: 0; background: #f00; }
.page p { margin: 18px 0 0; color: #000; font-size: 28.500px; line-height: 31px; letter-spacing: .78px; word-spacing: -1.600px; }
.page p span { display: block; text-align: justify; text-align-last: justify; white-space: nowrap; }
.page p .last { text-align-last: left; }

/* Sidebar */
.sidebar { display: flex; flex-direction: column; align-items: center; padding-top: 11px; }
.sidebar > .copilot { margin-bottom: 26px; }
.sidebar > .tool { height: 22px; margin-bottom: 28.300px; }
.sidebar hr { width: 35px; height: 1px; margin: 0 0 32px; border: 0; background: #bbb; }
.sidebar .low { margin: auto 0 16px; }
.sidebar .gear { margin-bottom: 17px; }

/* Taskbar */
.taskbar {
  display: flex; align-items: center; border-top: 1px solid #b5afa8; color: #222;
  background: linear-gradient(90deg, #ebdfd3, #f1e2cd 17%, #f0e0ca 32%, #e5ddd5 43%, #dfddda 58%, #d6dbe3 77%, #e3dcd4 87%, #e8dbd0 93%, #ddd8d5);
}
.weather { display: flex; gap: 11px; align-items: center; width: 383px; padding: 0 0 4px 27px; font-size: 15px; line-height: 20px; letter-spacing: -.4px; }
.weather b { display: block; font-weight: 400; }
.weather span { color: #5d574f; }
.search {
  display: flex; align-items: center; width: 274px; height: 39px; margin-left: 17px; padding-left: 14px;
  border: 1px solid #ddd1c2; border-bottom-color: #bbb1a6; border-radius: 20px; background: #fbf6ef;
}
.search span { margin-left: 12px; color: #555; font-size: 17px; letter-spacing: -.3px; }
.penguins { margin: 5px 10px 0 auto; }
.apps { display: flex; margin-left: 2px; height: 59px; }
.app { position: relative; display: flex; align-items: center; justify-content: center; width: 55.200px; padding-bottom: 2px; }
.app.run::after, .edge::after {
  content: ""; position: absolute; left: 50%; bottom: 5px; width: 8px; height: 4px; margin-left: -4px; border-radius: 2px; background: #85827f;
}
.edge::after { width: 20px; margin-left: -10px; background: #0a78d4; }
.edge::before { content: ""; position: absolute; z-index: -1; top: 5px; left: 4px; width: 48px; height: 49px; border-radius: 5px; background: #f2eee9; }
.edge { z-index: 0; }
.badge {
  position: absolute; top: 7px; left: 29px; width: 20px; height: 20px; border-radius: 50%; background: #25252d; color: #fff;
  font-size: 16px; line-height: 20px; text-align: center;
}
.badge.red { background: #c0320b; color: #ffd9cc; font-size: 12px; }
.tray { display: flex; align-items: center; margin-left: auto; font-size: 15px; line-height: 20px; letter-spacing: -.4px; white-space: nowrap; }
.sync { margin-left: 23px; }
.lang { width: 40px; margin: -2px 0 0 17px; text-align: center; }
.lang span, .clock span { display: block; }
.wifi { margin-left: 18px; }
.volume { margin-left: 10px; }
.battery { margin-left: 9px; }
.clock { width: 84px; margin: -4px 0 0 14px; text-align: right; }
.bell { margin-left: 11px; }
.preview { position: relative; margin: 0 25px 0 23px; height: 29px; }
.preview b {
  position: absolute; left: 6px; top: 19px; width: 23px; height: 10px; border-radius: 2px; background: #fdc50d; color: #222;
  font-size: 8.500px; line-height: 10px; text-align: center; letter-spacing: .3px;
}
```
